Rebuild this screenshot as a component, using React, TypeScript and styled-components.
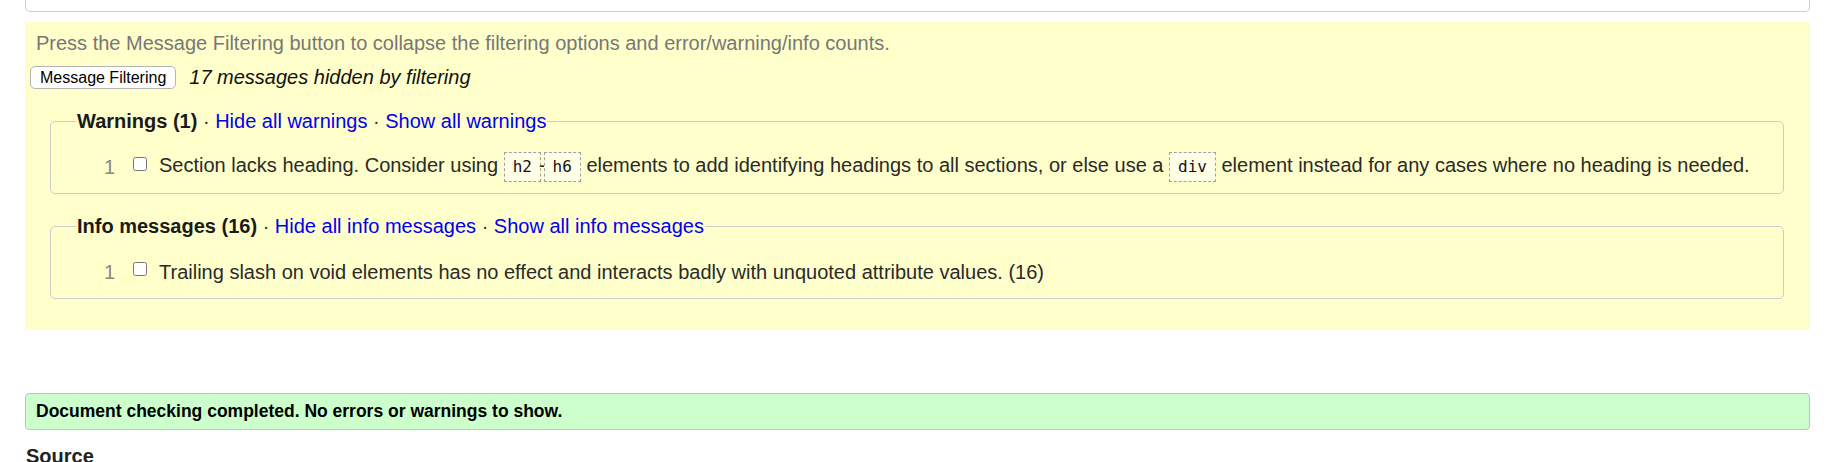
import React from "react";
import styled, { createGlobalStyle } from "styled-components";

const GlobalStyle = createGlobalStyle`
  html, body {
    margin: 0;
    padding: 0;
    background: #ffffff;
  }
  body {
    font-family: "Liberation Sans", Arial, sans-serif;
    color: #222222;
    font-size: 20px;
  }
`;

const Page = styled.div`
  padding: 0 30px 0 25px;
`;

const TopCard = styled.div`
  height: 11px;
  background: #ffffff;
  border: 1px solid #cccccc;
  border-top: none;
  border-radius: 0 0 5px 5px;
`;

const FilterPanel = styled.section`
  margin-top: 10px;
  background: #ffffcc;
  padding: 11px 26px 31px 5px;
`;

const Hint = styled.p`
  margin: 0 0 0 6px;
  color: #777777;
  font-size: 20px;
  line-height: 20px;
`;

const FilterRow = styled.div`
  margin-top: 13px;
  display: flex;
  align-items: center;
  gap: 13px;
  height: 23px;
`;

const FilterButton = styled.button`
  height: 23px;
  padding: 0 9px;
  font-family: "Liberation Sans", Arial, sans-serif;
  font-size: 16px;
  color: #000000;
  background: #ffffff;
  border: 1px solid #b5b5b5;
  border-radius: 5px;
  line-height: 20px;
`;

const HiddenNote = styled.em`
  font-size: 20px;
  color: #111111;
`;

const Group = styled.fieldset`
  margin: 22px 0 0 20px;
  padding: 0 0 11px 0;
  border: 1px solid #cccccc;
  border-radius: 5px;
  min-width: 0;
`;

const Legend = styled.legend`
  margin-left: 25px;
  padding: 0 1px;
  font-size: 20px;
  line-height: 21px;
`;

const LegendTitle = styled.strong`
  color: #1a1a1a;
`;

const Sep = styled.span`
  color: #333333;
`;

const Link = styled.a`
  color: #0000ee;
  text-decoration: none;
  cursor: pointer;
`;

const MessageRow = styled.div`
  margin-top: 20px;
  display: flex;
  align-items: center;
  height: 30px;
  padding-left: 53px;
`;

const MsgNum = styled.span`
  width: 29px;
  flex: none;
  color: #888888;
`;

const MsgCheck = styled.input`
  flex: none;
  width: 14px;
  height: 14px;
  margin: 0 12px 6px 0;
`;

const MsgText = styled.span`
  color: #2a2a2a;
  white-space: nowrap;
`;

const Code = styled.code`
  display: inline-block;
  font-family: "DejaVu Sans Mono", monospace;
  font-size: 16px;
  line-height: 28px;
  padding: 0 8px;
  border: 1px dashed #a0a0a0;
  background: #ffffe8;
  color: #111111;
  vertical-align: middle;
`;

const Dash = styled.span`
  margin: 0 -2px;
`;

const Success = styled.div`
  margin-top: 63px;
  padding: 8px 10px;
  line-height: 19px;
  background: #ccffcc;
  border: 1px solid #c2c2c2;
  border-radius: 4px;
  font-size: 17.5px;
  font-weight: bold;
  color: #000000;
`;

const SourceHeading = styled.h2`
  margin: 15px 0 0 1px;
  font-size: 20px;
  line-height: 23px;
  color: #222222;
`;

export default function App() {
  return (
    <>
      <GlobalStyle />
      <Page>
        <TopCard />
        <FilterPanel>
          <Hint>
            Press the Message Filtering button to collapse the filtering options and error/warning/info counts.
          </Hint>
          <FilterRow>
            <FilterButton type="button">Message Filtering</FilterButton>
            <HiddenNote>17 messages hidden by filtering</HiddenNote>
          </FilterRow>
          <Group>
            <Legend>
              <LegendTitle>Warnings (1)</LegendTitle>
              <Sep> · </Sep>
              <Link>Hide all warnings</Link>
              <Sep> · </Sep>
              <Link>Show all warnings</Link>
            </Legend>
            <MessageRow>
              <MsgNum>1</MsgNum>
              <MsgCheck type="checkbox" />
              <MsgText>
                Section lacks heading. Consider using <Code>h2</Code>
                <Dash>-</Dash>
                <Code>h6</Code> elements to add identifying headings to all sections, or else use a{" "}
                <Code>div</Code> element instead for any cases where no heading is needed.
              </MsgText>
            </MessageRow>
          </Group>
          <Group>
            <Legend>
              <LegendTitle>Info messages (16)</LegendTitle>
              <Sep> · </Sep>
              <Link>Hide all info messages</Link>
              <Sep> · </Sep>
              <Link>Show all info messages</Link>
            </Legend>
            <MessageRow>
              <MsgNum>1</MsgNum>
              <MsgCheck type="checkbox" />
              <MsgText>
                Trailing slash on void elements has no effect and interacts badly with unquoted attribute values. (16)
              </MsgText>
            </MessageRow>
          </Group>
        </FilterPanel>
        <Success>Document checking completed. No errors or warnings to show.</Success>
        <SourceHeading>Source</SourceHeading>
      </Page>
    </>
  );
}
